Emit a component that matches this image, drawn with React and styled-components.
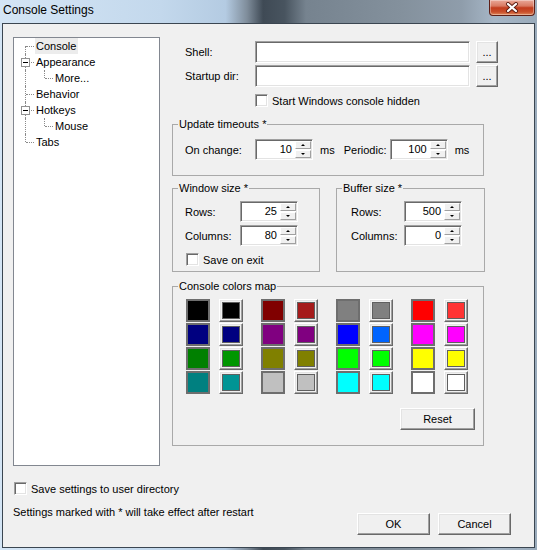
import React from "react";
import styled, { createGlobalStyle } from "styled-components";

const GlobalStyle = createGlobalStyle`
  html, body {
    margin: 0;
    padding: 0;
  }
  body {
    font-family: "Liberation Sans", Arial, sans-serif;
    font-size: 11px;
    color: #000;
  }
`;

const treeNodes = [
  { label: "Console", gutters: ["first"], selected: true },
  { label: "Appearance", gutters: ["tee"], box: true },
  { label: "More...", gutters: ["pipe", "last"] },
  { label: "Behavior", gutters: ["tee"] },
  { label: "Hotkeys", gutters: ["tee"], box: true },
  { label: "Mouse", gutters: ["pipe", "last"] },
  { label: "Tabs", gutters: ["last"] },
];

// big swatch = console colour, small = the mapped colour
const colorRows = [
  [["#000000", "#000000"], ["#800000", "#a51b1b"], ["#808080", "#808080"], ["#ff0000", "#ff3333"]],
  [["#000080", "#000080"], ["#800080", "#800080"], ["#0000ff", "#0064ff"], ["#ff00ff", "#ff00ff"]],
  [["#008000", "#009600"], ["#808000", "#808000"], ["#00ff00", "#00ff00"], ["#ffff00", "#ffff00"]],
  [["#008080", "#009494"], ["#c0c0c0", "#c0c0c0"], ["#00ffff", "#00ffff"], ["#ffffff", "#ffffff"]],
];

function Spin({ value }) {
  return (
    <SpinBox>
      <SpinValue>{value}</SpinValue>
      <SpinButtons>
        <SpinButton>
          <Arrow $up />
        </SpinButton>
        <SpinButton>
          <Arrow />
        </SpinButton>
      </SpinButtons>
    </SpinBox>
  );
}

function Check({ label, pad = 0, top = 0 }) {
  return (
    <CheckRow $pad={pad} $top={top}>
      <CheckBox />
      <span>{label}</span>
    </CheckRow>
  );
}

export default function App() {
  return (
    <>
      <GlobalStyle />
      <Window>
        <TitleBar>
          <Caption>Console Settings</Caption>
          <CloseButton>
            <svg width="14" height="11" viewBox="0 0 14 11">
              <path d="M3 2 L11 9 M11 2 L3 9" stroke="#5b1c12" strokeWidth="4" strokeLinecap="round" />
              <path d="M3 2 L11 9 M11 2 L3 9" stroke="#fff" strokeWidth="2.2" strokeLinecap="round" />
            </svg>
          </CloseButton>
        </TitleBar>

        <Client>
          <Main>
            <Tree>
              {treeNodes.map((node) => (
                <TreeRow key={node.label}>
                  {node.gutters.map((kind, i) => (
                    <Gutter key={i} $kind={kind}>
                      {node.box && i === node.gutters.length - 1 && <ExpandBox />}
                    </Gutter>
                  ))}
                  <NodeLabel $selected={node.selected}>{node.label}</NodeLabel>
                </TreeRow>
              ))}
            </Tree>

            <Panel>
              <FieldRow $top={4}>
                <FieldLabel>Shell:</FieldLabel>
                <Edit />
                <PushButton $w={22} $h={22} $ml={6}>...</PushButton>
              </FieldRow>
              <FieldRow $top={2}>
                <FieldLabel>Startup dir:</FieldLabel>
                <Edit />
                <PushButton $w={22} $h={22} $ml={6}>...</PushButton>
              </FieldRow>
              <Check label="Start Windows console hidden" pad={83} top={7} />

              <Group $top={11}>
                <Legend>Update timeouts *</Legend>
                <GroupBody $pad="8px 0 15px 12px">
                  <InlineRow>
                    <InlineLabel $w={70}>On change:</InlineLabel>
                    <Spin value="10" />
                    <Unit>ms</Unit>
                    <InlineLabel $w={46}>Periodic:</InlineLabel>
                    <Spin value="100" />
                    <Unit>ms</Unit>
                  </InlineRow>
                </GroupBody>
              </Group>

              <GroupPair>
                <Group $w={148}>
                  <Legend>Window size *</Legend>
                  <GroupBody $pad="6px 0 5px 12px">
                    <SizeRows>
                      <InlineRow>
                        <InlineLabel $w={55}>Rows:</InlineLabel>
                        <Spin value="25" />
                      </InlineRow>
                      <InlineRow>
                        <InlineLabel $w={55}>Columns:</InlineLabel>
                        <Spin value="80" />
                      </InlineRow>
                    </SizeRows>
                    <Check label="Save on exit" pad={1} top={7} />
                  </GroupBody>
                </Group>
                <Group $w={149}>
                  <Legend>Buffer size *</Legend>
                  <GroupBody $pad="6px 0 5px 14px">
                    <SizeRows>
                      <InlineRow>
                        <InlineLabel $w={53}>Rows:</InlineLabel>
                        <Spin value="500" />
                      </InlineRow>
                      <InlineRow>
                        <InlineLabel $w={53}>Columns:</InlineLabel>
                        <Spin value="0" />
                      </InlineRow>
                    </SizeRows>
                  </GroupBody>
                </Group>
              </GroupPair>

              <Group $top={8}>
                <Legend>Console colors map</Legend>
                <GroupBody $pad="6px 8px 15px 13px">
                  <ColorGrid>
                    {colorRows.map((row, r) => (
                      <ColorRow key={r}>
                        {row.map(([console, mapped], c) => (
                          <ColorPair key={c}>
                            <Swatch style={{ background: console }} />
                            <SwatchButton>
                              <InnerSwatch style={{ background: mapped }} />
                            </SwatchButton>
                          </ColorPair>
                        ))}
                      </ColorRow>
                    ))}
                  </ColorGrid>
                  <ResetRow>
                    <PushButton $w={75} $h={22}>Reset</PushButton>
                  </ResetRow>
                </GroupBody>
              </Group>
            </Panel>
          </Main>

          <Check label="Save settings to user directory" pad={1} top={16} />
          <BottomRow>
            <Note>Settings marked with * will take effect after restart</Note>
            <DialogButtons>
              <PushButton $w={73} $h={22}>OK</PushButton>
              <PushButton $w={73} $h={22}>Cancel</PushButton>
            </DialogButtons>
          </BottomRow>
        </Client>
      </Window>
    </>
  );
}

const raised = `
  border: 1px solid;
  border-color: #ffffff #696969 #696969 #ffffff;
  box-shadow: inset -1px -1px 0 #a0a0a0, inset 1px 1px 0 #e3e3e3;
  background: #f0f0f0;
`;

const sunken = `
  border: 1px solid;
  border-color: #a0a0a0 #ffffff #ffffff #a0a0a0;
  box-shadow: inset 1px 1px 0 #696969, inset -1px -1px 0 #e3e3e3;
  background: #ffffff;
`;

const Window = styled.div`
  width: 537px;
  height: 550px;
  box-sizing: border-box;
  display: flex;
  flex-direction: column;
  padding: 0 2px 2px 2px;
  overflow: hidden;
  background: linear-gradient(
    90deg,
    #d4e5f5 0%,
    #c3d8ec 30%,
    #b4cbe2 42%,
    #7f8d9b 46%,
    #3f4a55 49%,
    #48545f 53%,
    #76838f 57%,
    #84919d 75%,
    #8f9dab 86%,
    #a6b6c6 92%,
    #9aabbb 100%
  );
`;

const TitleBar = styled.div`
  height: 23px;
  flex: none;
  display: flex;
  align-items: flex-start;
  padding-left: 1px;
`;

const Caption = styled.div`
  font-size: 12px;
  line-height: 20px;
  color: #000;
`;

const CloseButton = styled.div`
  margin-left: auto;
  margin-right: 0;
  width: 46px;
  height: 16px;
  box-sizing: border-box;
  display: flex;
  align-items: center;
  justify-content: center;
  border: 1px solid #5e1f16;
  border-top: none;
  border-radius: 0 0 4px 4px;
  background: linear-gradient(180deg, #e9a898 0%, #d97a62 40%, #c23c1d 52%, #c9502c 80%, #e08a5c 100%);
  box-shadow: inset 0 0 0 1px rgba(255, 255, 255, 0.35);
`;

const Client = styled.div`
  flex: 1;
  min-height: 0;
  box-sizing: border-box;
  border: 1px solid #3b4651;
  background: #f0f0f0;
  padding: 13px 0 0 10px;
  display: flex;
  flex-direction: column;
`;

const Main = styled.div`
  display: flex;
  align-items: flex-start;
  gap: 12px;
`;

const Tree = styled.div`
  width: 147px;
  height: 429px;
  flex: none;
  box-sizing: border-box;
  border: 1px solid #828790;
  background: #fff;
  padding-left: 2px;
`;

const TreeRow = styled.div`
  display: flex;
  height: 16px;
  align-items: center;
`;

const Gutter = styled.span`
  position: relative;
  flex: none;
  width: 19px;
  height: 16px;

  &::before {
    content: "";
    position: absolute;
    left: 9px;
    top: ${(p) => (p.$kind === "first" ? "8px" : "0")};
    bottom: ${(p) => (p.$kind === "last" ? "8px" : "0")};
    border-left: 1px dotted #8a8a8a;
  }

  &::after {
    content: "";
    position: absolute;
    left: 10px;
    right: 1px;
    top: 8px;
    border-top: 1px dotted #8a8a8a;
    display: ${(p) => (p.$kind === "pipe" ? "none" : "block")};
  }
`;

const ExpandBox = styled.span`
  position: absolute;
  left: 5px;
  top: 4px;
  width: 9px;
  height: 9px;
  box-sizing: border-box;
  border: 1px solid #919191;
  background: #fff;
  z-index: 1;

  &::after {
    content: "";
    position: absolute;
    left: 1px;
    right: 1px;
    top: 3px;
    height: 1px;
    background: #000;
  }
`;

const NodeLabel = styled.span`
  height: 16px;
  line-height: 16px;
  padding: 0 2px 0 1px;
  background: ${(p) => (p.$selected ? "#ececec" : "transparent")};
`;

const Panel = styled.div`
  width: 326px;
  display: flex;
  flex-direction: column;
`;

const FieldRow = styled.div`
  display: flex;
  align-items: center;
  height: 22px;
  margin-top: ${(p) => p.$top}px;
`;

const FieldLabel = styled.div`
  width: 83px;
  padding-left: 13px;
  box-sizing: border-box;
`;

const Edit = styled.div`
  width: 215px;
  height: 22px;
  box-sizing: border-box;
  ${sunken}
`;

const PushButton = styled.div`
  width: ${(p) => p.$w}px;
  height: ${(p) => p.$h}px;
  margin-left: ${(p) => p.$ml || 0}px;
  box-sizing: border-box;
  display: flex;
  align-items: center;
  justify-content: center;
  flex: none;
  ${raised}
`;

const CheckRow = styled.div`
  display: flex;
  align-items: center;
  gap: 4px;
  height: 13px;
  padding-left: ${(p) => p.$pad}px;
  margin-top: ${(p) => p.$top}px;
`;

const CheckBox = styled.span`
  width: 13px;
  height: 13px;
  box-sizing: border-box;
  flex: none;
  ${sunken}
`;

const Group = styled.fieldset`
  margin: ${(p) => p.$top || 0}px 0 0 0;
  padding: 0;
  width: ${(p) => (p.$w ? `${p.$w}px` : "312px")};
  box-sizing: border-box;
  border: 1px solid #a9a9a9;
  min-width: 0;
`;

const Legend = styled.legend`
  margin-left: 5px;
  padding: 0 1px;
  line-height: 13px;
  font-size: 11px;
`;

const GroupBody = styled.div`
  padding: ${(p) => p.$pad};
`;

const GroupPair = styled.div`
  display: flex;
  gap: 16px;
  margin-top: 6px;
`;

const InlineRow = styled.div`
  display: flex;
  align-items: center;
  height: 21px;
`;

const InlineLabel = styled.div`
  width: ${(p) => p.$w}px;
  flex: none;
`;

const Unit = styled.div`
  margin: 0 9px 0 7px;
`;

const SizeRows = styled.div`
  display: flex;
  flex-direction: column;
  gap: 3px;
`;

const SpinBox = styled.div`
  width: 58px;
  height: 21px;
  box-sizing: border-box;
  display: flex;
  padding: 1px;
  flex: none;
  ${sunken}
`;

const SpinValue = styled.div`
  flex: 1;
  text-align: right;
  padding-right: 3px;
  line-height: 17px;
`;

const SpinButtons = styled.div`
  width: 16px;
  display: flex;
  flex-direction: column;
  gap: 1px;
`;

const SpinButton = styled.div`
  flex: 1;
  display: flex;
  align-items: center;
  justify-content: center;
  box-sizing: border-box;
  border: 1px solid;
  border-color: #ffffff #a0a0a0 #a0a0a0 #ffffff;
  background: #f0f0f0;
`;

const Arrow = styled.span`
  width: 0;
  height: 0;
  border-left: 2px solid transparent;
  border-right: 2px solid transparent;
  ${(p) => (p.$up ? "border-bottom: 2px solid #000;" : "border-top: 2px solid #000;")}
`;

const ColorGrid = styled.div`
  display: flex;
  flex-direction: column;
  gap: 1px;
`;

const ColorRow = styled.div`
  display: flex;
  gap: 18px;
`;

const ColorPair = styled.div`
  display: flex;
  gap: 9px;
`;

const Swatch = styled.div`
  width: 24px;
  height: 23px;
  box-sizing: border-box;
  border: 2px solid #6e6e6e;
`;

const SwatchButton = styled.div`
  width: 24px;
  height: 23px;
  box-sizing: border-box;
  display: flex;
  align-items: center;
  justify-content: center;
  ${raised}
`;

const InnerSwatch = styled.div`
  width: 18px;
  height: 17px;
  box-sizing: border-box;
  border: 1px solid #5f5f5f;
`;

const ResetRow = styled.div`
  display: flex;
  justify-content: flex-end;
  margin-top: 14px;
`;

const BottomRow = styled.div`
  display: flex;
  justify-content: space-between;
  align-items: flex-start;
  margin-top: 11px;
  margin-right: 23px;
`;

const Note = styled.div`
  line-height: 13px;
`;

const DialogButtons = styled.div`
  display: flex;
  gap: 8px;
  margin-top: 7px;
`;
